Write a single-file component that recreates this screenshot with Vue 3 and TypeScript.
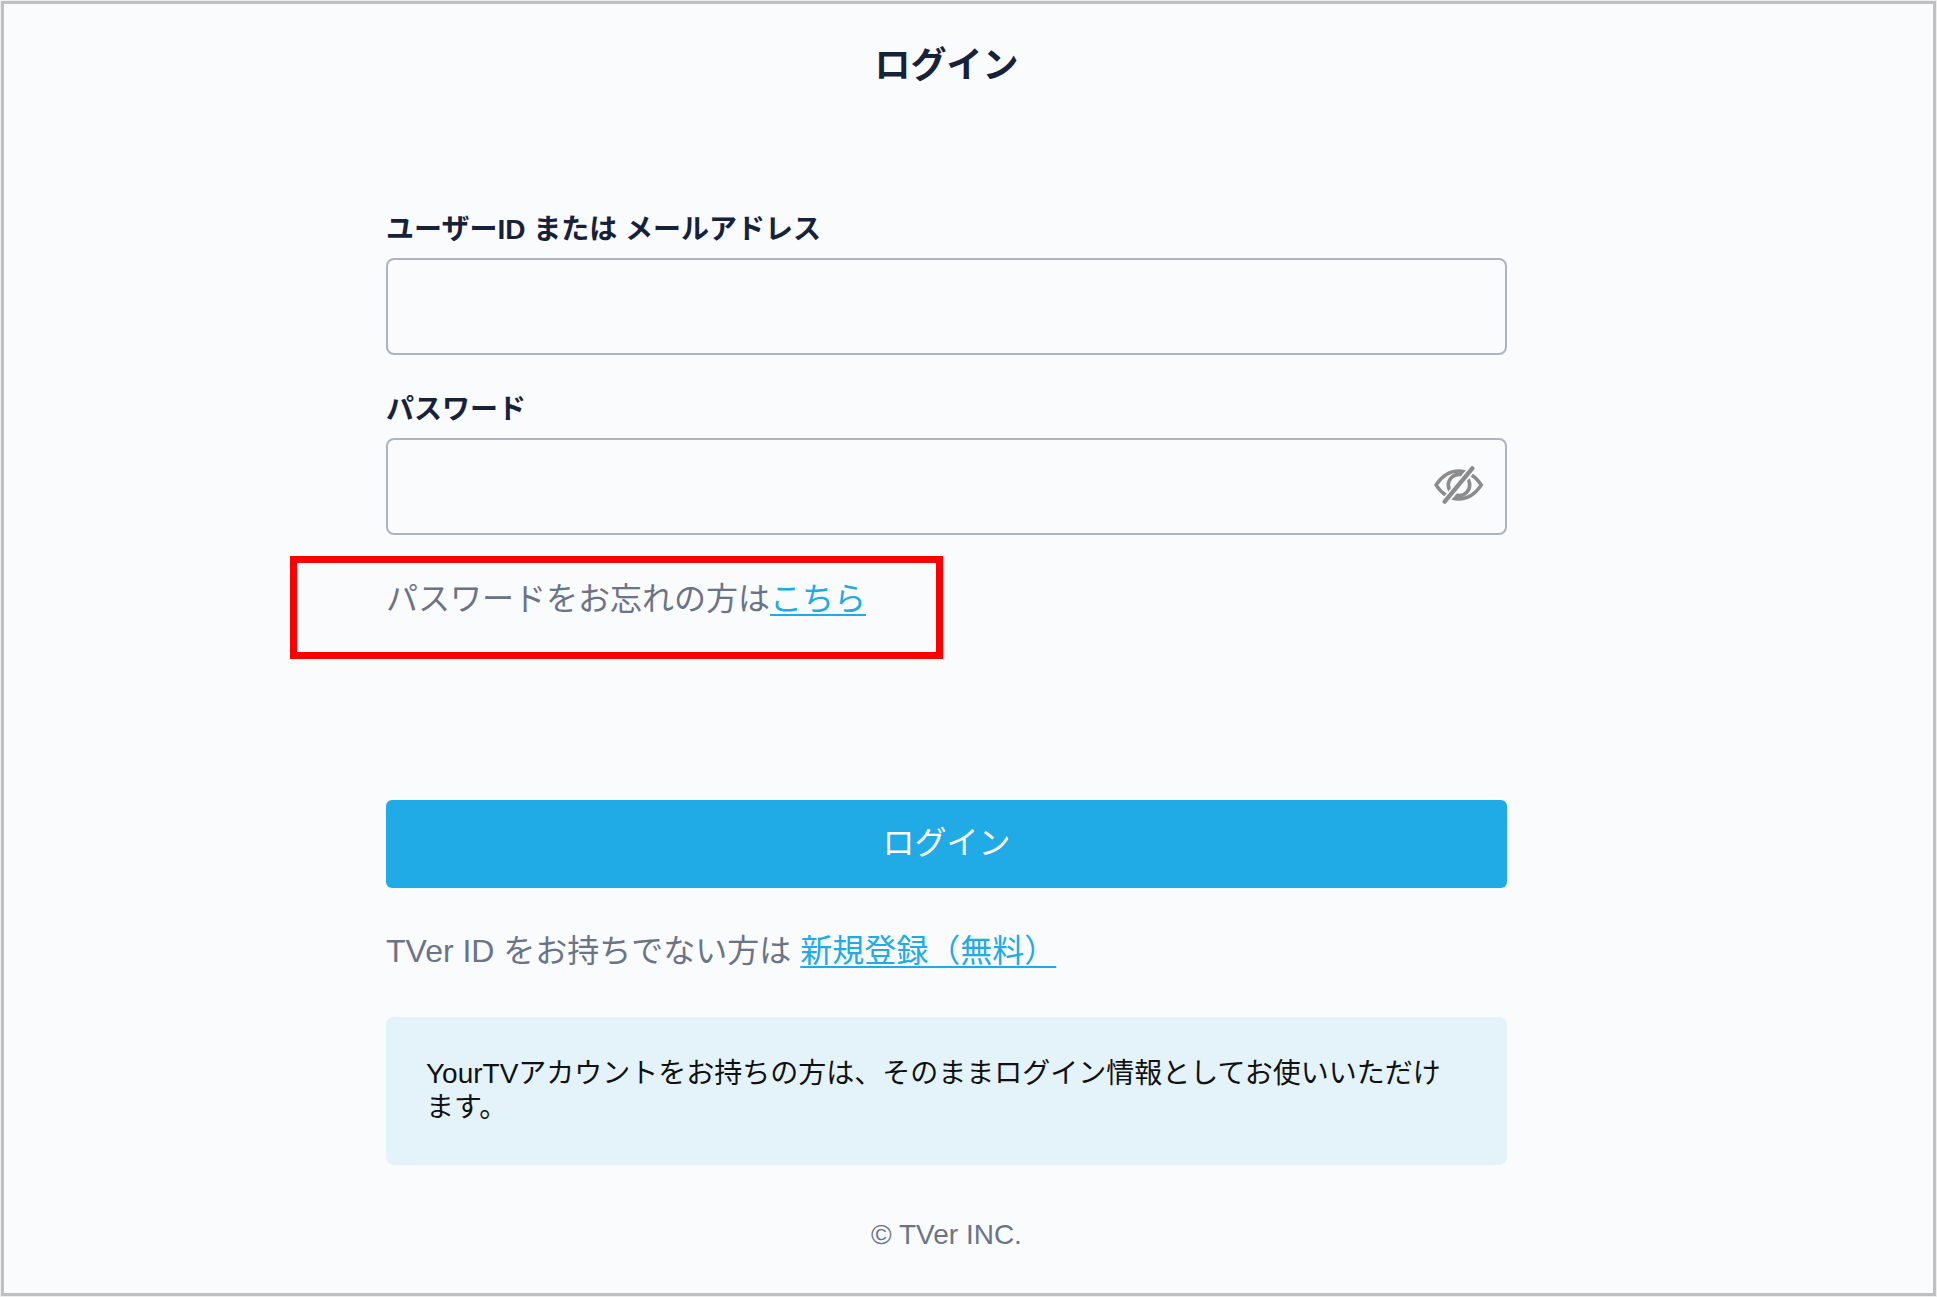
<script setup lang="ts">
import { ref } from 'vue'

const userId = ref('')
const password = ref('')
const visible = ref(false)
</script>

<template>
  <div class="page">
    <main class="content">
      <h1 class="title">ログイン</h1>
      <form class="form" @submit.prevent>
        <div class="field">
          <label class="label" for="user-id">ユーザーID または メールアドレス</label>
          <input id="user-id" v-model="userId" class="input" type="text" />
        </div>
        <div class="field">
          <label class="label" for="password">パスワード</label>
          <div class="password">
            <input id="password" v-model="password" class="input" :type="visible ? 'text' : 'password'" />
            <button class="eye" type="button" aria-label="パスワードを表示" @click="visible = !visible">
              <svg viewBox="0 0 150 114" width="50" height="38" fill="none" stroke="#8c8c8c">
                <path d="M6 57C24 30 46 15 74 15S124 30 142 57C124 84 102 99 74 99S24 84 6 57Z" stroke-width="10" />
                <circle cx="75" cy="57" r="32" stroke-width="11" />
                <path d="M27 114L121 0" stroke="#fafbfd" stroke-width="23" />
                <path d="M32 107L115 7" stroke-width="13" stroke-linecap="round" />
              </svg>
            </button>
          </div>
        </div>
        <p class="text forgot">パスワードをお忘れの方は<a class="link" href="#">こちら</a></p>
        <button class="submit" type="submit">ログイン</button>
      </form>
      <p class="text">TVer ID をお持ちでない方は <a class="link" href="#">新規登録（無料）</a></p>
      <p class="notice">YourTVアカウントをお持ちの方は、そのままログイン情報としてお使いいただけます。</p>
      <footer class="footer">© TVer INC.</footer>
    </main>
  </div>
</template>

<style>
body {
  background: #eeeeee;
}
</style>

<style scoped>
.page {
  box-sizing: border-box;
  min-height: calc(100vh - 2px);
  margin: 1px;
  padding: 38px 44px 32px 0;
  border: 3px solid #c0c0c0;
  background: #fafbfd;
  color: #16213a;
  font-family: "Liberation Sans", "Noto Sans CJK JP", sans-serif;
}

.content {
  width: 100%;
  max-width: 1121px;
  margin: 0 auto;
}

.title {
  margin: 0 0 120px;
  font-size: 36px;
  line-height: 48px;
  font-weight: 700;
  text-align: center;
}

.form {
  display: flex;
  flex-direction: column;
}

.field {
  display: flex;
  flex-direction: column;
  gap: 8px;
  margin-bottom: 35px;
}

.label {
  font-size: 28px;
  line-height: 40px;
  font-weight: 700;
}

.input {
  box-sizing: border-box;
  display: block;
  width: 100%;
  height: 97px;
  padding: 0 24px;
  border: 2px solid #adb3c0;
  border-radius: 8px;
  background: transparent;
  color: inherit;
  font: inherit;
  font-size: 32px;
}

.password {
  position: relative;
}

.eye {
  position: absolute;
  top: 0;
  right: 23px;
  display: flex;
  align-items: center;
  height: 94px;
  padding: 0;
  border: 0;
  background: none;
}

.text {
  margin: 0;
  color: #6b7487;
  font-size: 32px;
  line-height: 48px;
}

.forgot {
  position: relative;
  margin-top: 5px;
  margin-bottom: 177px;
}

.forgot::after {
  content: "";
  position: absolute;
  top: -19px;
  left: -96px;
  box-sizing: border-box;
  width: 653px;
  height: 103px;
  border: 7px solid #ff0000;
  pointer-events: none;
}

.link {
  color: #20aae6;
  text-decoration-thickness: 2px;
  text-underline-offset: 4px;
}

.submit {
  height: 88px;
  margin-bottom: 39px;
  padding: 0 0 8px;
  border: 0;
  border-radius: 6px;
  background: #20aae6;
  color: #ffffff;
  font: inherit;
  font-size: 32px;
}

.notice {
  margin: 42px 0 54px;
  padding: 40px;
  border-radius: 8px;
  background: #e4f3fa;
  color: #111111;
  font-size: 28px;
  line-height: 34px;
}

.footer {
  color: #6b7487;
  font-size: 28px;
  line-height: 32px;
  text-align: center;
}
</style>
